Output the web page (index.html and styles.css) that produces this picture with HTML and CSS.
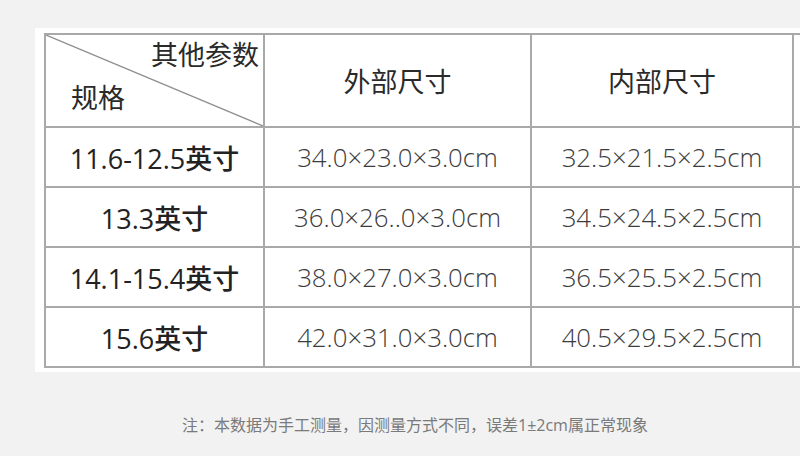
FILE: index.html
```html
<!DOCTYPE html>
<html lang="zh-CN">
<head>
<meta charset="utf-8">
<title>尺寸表</title>
<link rel="stylesheet" href="styles.css">
</head>
<body>
<div class="card">
  <table class="spec">
    <colgroup>
      <col class="c1"><col class="c2"><col class="c3"><col class="c4">
    </colgroup>
    <thead>
      <tr class="head">
        <th class="corner">
          <svg class="diag" viewBox="0 0 100 100" preserveAspectRatio="none"><line x1="0" y1="0" x2="100" y2="100" stroke="#8f8f8f" stroke-width="1.3" vector-effect="non-scaling-stroke"/></svg>
          <div class="corner-in">
            <span class="other">其他参数</span>
            <span class="spec-l">规格</span>
          </div>
        </th>
        <th>外部尺寸</th>
        <th>内部尺寸</th>
        <th></th>
      </tr>
    </thead>
    <tbody>
      <tr><td class="name">11.6-12.5英寸</td><td>34.0×23.0×3.0cm</td><td>32.5×21.5×2.5cm</td><td></td></tr>
      <tr><td class="name">13.3英寸</td><td>36.0×26..0×3.0cm</td><td>34.5×24.5×2.5cm</td><td></td></tr>
      <tr><td class="name">14.1-15.4英寸</td><td>38.0×27.0×3.0cm</td><td>36.5×25.5×2.5cm</td><td></td></tr>
      <tr><td class="name">15.6英寸</td><td>42.0×31.0×3.0cm</td><td>40.5×29.5×2.5cm</td><td></td></tr>
    </tbody>
  </table>
</div>
<p class="note">注：本数据为手工测量，因测量方式不同，误差1±2cm属正常现象</p>
</body>
</html>
```

FILE: styles.css
```css
html, body {
  margin: 0;
  padding: 0;
  background: #f2f2f2;
  font-family: "Noto Sans CJK SC", "Noto Sans", sans-serif;
}

.card {
  margin: 28px 0 0 35px;
  background: #fff;
  padding: 5px 0 4px 9px;
  overflow: hidden;
}

.spec {
  border-collapse: collapse;
  table-layout: fixed;
  width: 960px;
}

.c1 { width: 219px; }
.c2 { width: 267px; }
.c3 { width: 262px; }
.c4 { width: 212px; }

.spec th, .spec td {
  border: 2px solid #a9a9a9;
  text-align: center;
  padding: 0;
  color: #3a3a3a;
}

.head th {
  height: 91px;
  font-size: 27px;
  font-weight: 400;
  color: #2a2a2a;
}

.spec tbody td {
  height: 58px;
  font-family: "Open Sans", "Noto Sans CJK SC", sans-serif;
  font-size: 25.8px;
  font-weight: 300;
  color: #3c3c3c;
}

.spec tbody td.name {
  font-family: "Open Sans", "Noto Sans CJK SC", sans-serif;
  font-size: 27px;
  font-weight: 500;
  color: #222;
}

.corner {
  position: relative;
}

.diag {
  position: absolute;
  left: 0;
  top: 0;
  width: 100%;
  height: 100%;
}

.corner-in {
  display: flex;
  flex-direction: column;
  height: 91px;
  padding: 0 4px 0 25px;
  box-sizing: border-box;
}

.other {
  align-self: flex-end;
  margin-top: 1px;
  line-height: 36px;
}

.spec-l {
  align-self: flex-start;
  margin-top: 7px;
  line-height: 36px;
}

.note {
  margin: 40px 0 0 182px;
  font-family: "Open Sans", "Noto Sans CJK SC", sans-serif;
  font-size: 16px;
  color: #7a7a7a;
  font-weight: 400;
}
```
